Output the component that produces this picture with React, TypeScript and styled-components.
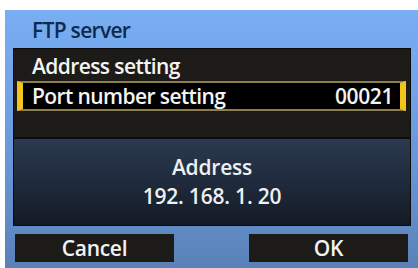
import styled, { createGlobalStyle } from "styled-components";

const GlobalStyle = createGlobalStyle`
    html, body {
        margin: 0;
        padding: 0;
        background: #ffffff;
    }
    body {
        width: 418px;
        height: 268px;
        overflow: hidden;
        font-family: "Open Sans", "DejaVu Sans", sans-serif;
        font-weight: 600;
    }
`;

const Screen = styled.div`
    margin: 10px 0 0 5px;
    width: 413px;
    height: 258px;
    box-sizing: border-box;
    background: linear-gradient(180deg, #79aef3 0%, #70a2e6 35%, #6591cf 70%, #5a82b8 100%);
    display: flex;
    flex-direction: column;
`;

const Title = styled.div`
    height: 38px;
    padding: 3px 0 0 27px;
    box-sizing: border-box;
    font-size: 21px;
    line-height: 35px;
    color: #0e2a4d;
    letter-spacing: -0.7px;
`;

const Panel = styled.div`
    margin: 0 7px 0 8px;
    display: flex;
    flex-direction: column;
    border: 1px solid #0b0b0b;
`;

const List = styled.div`
    height: 88px;
    box-sizing: border-box;
    padding: 2px 4px 0 3px;
    background: #1d1b18;
`;

const Row = styled.div<{ $selected?: boolean }>`
    height: 30px;
    box-sizing: border-box;
    display: flex;
    align-items: center;
    justify-content: space-between;
    padding: 0 13px 0 15px;
    font-size: 21px;
    color: #f4f4f4;
    letter-spacing: -0.6px;
    ${({ $selected }) => $selected && `
        background: #000000;
        border-top: 2px solid #8d7f4c;
        border-bottom: 2px solid #8d7f4c;
        border-left: 6px solid #f3c51b;
        border-right: 6px solid #f3c51b;
        padding: 0 7px 0 9px;
    `}
`;

const Value = styled.span`
    font-size: 21px;
    letter-spacing: -0.4px;
`;

const Info = styled.div`
    height: 88px;
    box-sizing: border-box;
    border-top: 2px solid #0b0d10;
    background: linear-gradient(180deg, #2b3a50 0%, #1f2b3c 50%, #131a25 100%);
    display: flex;
    flex-direction: column;
    align-items: center;
    justify-content: center;
    color: #eef0f2;
    font-size: 21px;
    line-height: 29px;
    letter-spacing: -0.2px;
`;

const Buttons = styled.div`
    margin-top: 8px;
    padding: 0 10px;
    display: flex;
    justify-content: space-between;
`;

const Button = styled.div`
    width: 159px;
    height: 28px;
    background: #1c1b18;
    color: #f2f2f2;
    font-size: 21px;
    line-height: 28px;
    text-align: center;
    letter-spacing: -0.3px;
`;

export default function App() {
    return (
        <>
            <GlobalStyle />
            <Screen>
                <Title>FTP server</Title>
                <Panel>
                    <List>
                        <Row>Address setting</Row>
                        <Row $selected>
                            <span>Port number setting</span>
                            <Value>00021</Value>
                        </Row>
                    </List>
                    <Info>
                        <div>Address</div>
                        <div>192. 168. 1. 20</div>
                    </Info>
                </Panel>
                <Buttons>
                    <Button>Cancel</Button>
                    <Button>OK</Button>
                </Buttons>
            </Screen>
        </>
    );
}
